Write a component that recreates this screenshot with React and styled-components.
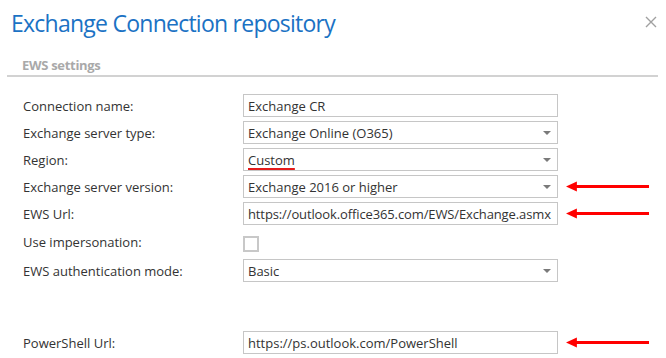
import React from "react";
import styled, { createGlobalStyle } from "styled-components";

const Global = createGlobalStyle`
  html, body { margin: 0; padding: 0; background: #fff; }
  body { font-family: "Open Sans", "Noto Sans", sans-serif; color: #333; }
`;

const Dialog = styled.div`
  width: 666px;
  height: 358px;
  box-sizing: border-box;
  padding: 7px 0 0 0;
  overflow: hidden;
`;

const Header = styled.div`
  display: flex;
  align-items: flex-start;
  justify-content: space-between;
  padding: 0 9px 0 11px;
  height: 49px;
`;

const Title = styled.h1`
  margin: 0;
  font-weight: 400;
  font-size: 23px;
  line-height: 32px;
  color: #1b72c4;
  letter-spacing: -0.75px;
`;

const Close = styled.button`
  border: 0;
  background: none;
  padding: 0;
  margin-top: 9px;
  width: 12px;
  height: 12px;
  display: flex;
  cursor: pointer;
`;

const Section = styled.div`
  margin: 0 8px 0 7px;
  border-bottom: 2px solid #d2d2d2;
  padding: 0 0 1px 15px;
  font-weight: 700;
  font-size: 13px;
  line-height: 18px;
  letter-spacing: -0.3px;
  color: #a9a9a9;
`;

const Form = styled.div`
  display: grid;
  grid-template-columns: 220px 315px 92px;
  row-gap: 4px;
  padding: 17px 0 0 23px;
  font-size: 13px;
`;

const Label = styled.div`
  display: flex;
  align-items: center;
  min-height: ${(p) => p.$h || 23}px;
  color: #333;
  white-space: nowrap;
`;

const Field = styled.div`
  box-sizing: border-box;
  height: 23px;
  border: 1px solid #c6c6c6;
  background: #fff;
  display: flex;
  align-items: center;
  justify-content: space-between;
  padding: 0 6px 0 4px;
  color: #333;
  white-space: nowrap;
  overflow: hidden;
  letter-spacing: ${(p) => (p.$tight ? "-0.12px" : "0")};
`;

const Misspelled = styled.span`
  text-decoration: underline;
  text-decoration-color: #e41b1b;
  text-decoration-thickness: 2px;
  text-underline-offset: 3px;
`;

const Caret = styled.span`
  width: 0;
  height: 0;
  border-left: 4px solid transparent;
  border-right: 4px solid transparent;
  border-top: 4px solid #7a7a7a;
`;

const CheckCell = styled.div`
  height: 26px;
  display: flex;
  align-items: flex-start;
`;

const Checkbox = styled.span`
  box-sizing: border-box;
  display: block;
  width: 16px;
  height: 16px;
  margin-top: 7px;
  border: 2px solid #c8c8c8;
  background: #fff;
`;

const Mark = styled.div`
  display: flex;
  align-items: center;
  padding-left: 8px;
`;

const Spacer = styled.div`
  grid-column: 1 / -1;
  height: 41px;
`;

const Arrow = () => (
  <svg width="85" height="11" viewBox="0 0 85 11">
    <line x1="9" y1="5.5" x2="84" y2="5.5" stroke="#f00" strokeWidth="3" />
    <polygon points="0,5.5 11,0.5 11,10.5" fill="#f00" />
  </svg>
);

const Select = ({ children }) => (
  <Field>
    <span>{children}</span>
    <Caret />
  </Field>
);

export default function App() {
  return (
    <>
      <Global />
      <Dialog>
        <Header>
          <Title>Exchange Connection repository</Title>
          <Close aria-label="Close">
            <svg width="12" height="12" viewBox="0 0 12 12">
              <path d="M1 1 L11 11 M11 1 L1 11" stroke="#a0a0a0" strokeWidth="1.4" />
            </svg>
          </Close>
        </Header>
        <Section>EWS settings</Section>
        <Form>
          <Label>Connection name:</Label>
          <Field>Exchange CR</Field>
          <Mark />

          <Label>Exchange server type:</Label>
          <Select>Exchange Online (O365)</Select>
          <Mark />

          <Label>Region:</Label>
          <Select>
            <Misspelled>Custom</Misspelled>
          </Select>
          <Mark />

          <Label>Exchange server version:</Label>
          <Select>Exchange 2016 or higher</Select>
          <Mark>
            <Arrow />
          </Mark>

          <Label>EWS Url:</Label>
          <Field $tight>https://outlook.office365.com/EWS/Exchange.asmx</Field>
          <Mark>
            <Arrow />
          </Mark>

          <Label $h={26}>Use impersonation:</Label>
          <CheckCell>
            <Checkbox />
          </CheckCell>
          <Mark />

          <Label>EWS authentication mode:</Label>
          <Select>Basic</Select>
          <Mark />

          <Spacer />

          <Label>PowerShell Url:</Label>
          <Field>https://ps.outlook.com/PowerShell</Field>
          <Mark>
            <Arrow />
          </Mark>
        </Form>
      </Dialog>
    </>
  );
}
